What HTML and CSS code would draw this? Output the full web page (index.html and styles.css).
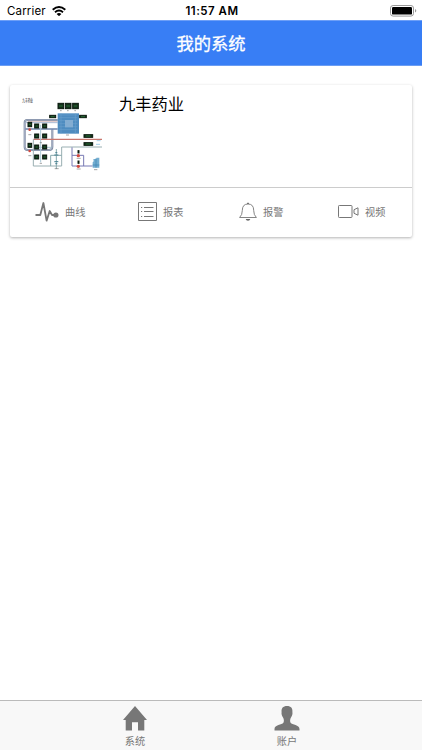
FILE: index.html
```
<!DOCTYPE html>
<html lang="zh-CN">
<head>
  <meta charset="UTF-8">
  <meta name="viewport" content="width=device-width, initial-scale=1.0">
  <title>我的系统</title>
  <link rel="stylesheet" href="styles.css">
</head>
<body>
  <div class="status-bar">
    <div class="carrier">
      <span>Carrier</span>
      <svg class="wifi" viewBox="0 0 14 10">
        <path d="M.7 3.8Q7-1.6 13.3 3.8M3 6.3Q7 2.9 11 6.3" fill="none" stroke="#000" stroke-width="1.9"/>
        <path d="M4.6 7.9Q7 6 9.4 7.9L7 10.2z"/>
      </svg>
    </div>
    <div class="time">11:57 AM</div>
    <svg class="battery" viewBox="0 0 27 12">
      <rect x=".5" y=".5" width="23" height="10.6" rx="2.6" fill="#fff" stroke="#999"/>
      <rect x="2" y="2" width="20" height="7.6" rx="1.2"/>
      <path d="M25 4v3.6q1.3-.6 1.3-1.8T25 4" fill="#999"/>
    </svg>
  </div>

  <header class="header">我的系统</header>

  <main class="content">
    <div class="card">
      <div class="card-main">
        <svg class="thumb" viewBox="0 0 300 300">
          <text x="37" y="51" textLength="32" lengthAdjust="spacingAndGlyphs" class="thumb-title">九丰药业</text>
          <!-- 管道 -->
          <g fill="none" stroke-width="3">
            <path d="M143 105H52q-8 0-8 8v73q0 9 9 9h64q10 0 10-10v-52" stroke="#75829b" stroke-width="6"/>
            <path d="M143 105H52q-8 0-8 8v73q0 9 9 9h64q10 0 10-10v-52" stroke="#c3cbdc" stroke-width="2"/>
            <path d="M46 113H143" stroke="#a9b8d2"/>
            <path d="M46 132H143" stroke="#6e83aa" stroke-width="4"/>
            <path d="M54 109H143" stroke="#c8a3a3" stroke-width="2"/>
            <path d="M70 163H276" stroke="#c9766e" stroke-width="3.5"/>
            <path d="M70 163V243H155V186H276" stroke="#9aafb2"/>
            <path d="M92 119V232M74 187H125" stroke="#aac6d4"/>
            <path d="M122 211H155M122 211V243M139 192V252" stroke="#88a9ad"/>
            <path d="M186 187V243H248M186 211H221V243" stroke="#7779b4"/>
          </g>
          <rect x="143" y="85" width="64" height="61" fill="#4e8cc0"/>
          <path d="M148 90H202M148 98H202M148 107H202M148 116H202M148 125H202M148 134H202M153 86V145M196 86V145" stroke="#689fcb" stroke-width="2"/>
          <rect x="165" y="105" width="24" height="22" fill="#83add2"/>
          <!-- 数据显示框 -->
          <g fill="#123018" stroke="#0a190e" stroke-width="3">
            <rect x="144" y="55" width="17" height="16"/><rect x="166" y="55" width="17" height="16"/><rect x="188" y="55" width="17" height="16"/>
            <rect x="119" y="91" width="18" height="7"/><rect x="209" y="91" width="20" height="7"/>
            <rect x="222" y="149" width="26" height="8"/><rect x="222" y="173" width="26" height="8"/>
            <rect x="54" y="112" width="11" height="13"/><rect x="74" y="117" width="12" height="12"/><rect x="98" y="117" width="12" height="12"/>
            <rect x="74" y="147" width="12" height="12"/><rect x="98" y="147" width="12" height="12"/>
            <rect x="54" y="175" width="11" height="12"/><rect x="74" y="180" width="12" height="12"/><rect x="98" y="180" width="12" height="12"/>
            <rect x="74" y="210" width="12" height="12"/><rect x="98" y="210" width="12" height="12"/>
            <rect x="204" y="197" width="3" height="7"/><rect x="204" y="228" width="3" height="7"/>
          </g>
          <path d="M147 63H158M169 63H180M191 63H202M122 95H134M213 95H225M227 153H242M227 177H242M56 118H63M77 123H83M101 123H107M77 153H83M101 153H107M56 181H63M77 186H83M101 186H107M77 216H83M101 216H107" stroke="#286b38" stroke-width="3"/>
          <g fill="#d24a40">
            <circle cx="59" cy="134" r="4"/><circle cx="59" cy="198" r="4"/>
            <circle cx="205" cy="212" r="5"/><circle cx="205" cy="244" r="5"/>
          </g>
          <path d="M133 210h12M133 230h12M136 203h6M136 236h6" stroke="#457f90" stroke-width="3"/>
          <path d="M250 222h9v-4h9v30h-20v-16l3-3z" fill="#73add0"/>
          <path d="M248 240h20M258 220v28" stroke="#3d84b3" stroke-width="2"/>
          <path d="M55 149h9M55 212h9M89 173h7M89 235h7M134 251h12M168 150h9M200 220h12M200 252h12M252 254h10M150 77h5M171 77h5M193 77h5" stroke="#777" stroke-width="2"/>
          <path d="M260 167h12M258 178h12" stroke="#79b9df" stroke-width="2"/>
        </svg>
        <h2 class="card-title">九丰药业</h2>
      </div>
      <div class="actions">
        <div class="action">
          <svg class="icon-curve" viewBox="0 0 24 20">
            <path d="M.5 13H5.3L8.4 1 11.6 18.7 14.7 9 17 13H20" fill="none" stroke="#777" stroke-width="1.8" stroke-linejoin="round"/>
            <circle cx="20.9" cy="13" r="2.6" fill="#777"/>
          </svg>
          <span>曲线</span>
        </div>
        <div class="action">
          <svg class="icon-list" viewBox="0 0 19 19">
            <path d="M.5.5H18.5V18.5H.5zM6 5.5H15.5M6 9.5H15.5M6 14.5H15.5M3 5.5H4.2M3 9.5H4.2M3 14.5H4.2" fill="none" stroke="#777"/>
          </svg>
          <span>报表</span>
        </div>
        <div class="action">
          <svg class="icon-bell" viewBox="0 0 18 19">
            <path d="M.6 15.5Q3.3 13 3.3 8.5 3.3 2 9 2 14.7 2 14.7 8.5 14.7 13 17.4 15.5z" fill="none" stroke="#777" stroke-width=".9"/>
            <path d="M8 2q0-1.6 1-1.6T10 2zM6.7 17H11.3Q11 18.7 9 18.7 7 18.7 6.7 17" fill="#666"/>
          </svg>
          <span>报警</span>
        </div>
        <div class="action">
          <svg class="icon-video" viewBox="0 0 21 13">
            <rect x=".5" y=".5" width="13.5" height="12" rx=".8" fill="none" stroke="#777"/>
            <path d="M16 4.7 20 2.8V10.2L16 8.3z" fill="none" stroke="#777"/>
          </svg>
          <span>视频</span>
        </div>
      </div>
    </div>
  </main>

  <nav class="tabs">
    <div class="tab">
      <svg viewBox="0 0 24 25" fill="#777">
        <path d="M12 0 24 14H21.3V24.5H15V16.3H9V24.5H2.7V14H0z"/>
      </svg>
      <span>系统</span>
    </div>
    <div class="tab">
      <svg viewBox="0 0 24 25" fill="#777">
        <path d="M12 0C8 0 6.2 2.2 6.6 6 6.2 8 7 10 8 11.6 9 13.3 9.2 15.3 8.4 16.8 7 19-.5 18.8-.5 23V24.5H24.5V23C24.5 18.8 17 19 15.6 16.8 14.8 15.3 15 13.3 16 11.6 17 10 17.8 8 17.4 6 17.8 2.2 16 0 12 0z"/>
      </svg>
      <span>账户</span>
    </div>
  </nav>
</body>
</html>
```
FILE: styles.css
```
* {
  box-sizing: border-box;
}
body {
  margin: 0;
  height: 100vh;
  display: flex;
  flex-direction: column;
  overflow: hidden;
  background: #fff;
  color: #000;
  font-family: Inter, "Noto Sans CJK SC", sans-serif;
}
svg {
  display: block;
  flex: none;
}
.status-bar {
  height: 20px;
  padding: 2px 5px 0 7px;
  display: grid;
  grid-template-columns: 1fr auto 1fr;
  align-items: center;
  font-size: 11.5px;
}
.carrier {
  display: flex;
  align-items: center;
  gap: 6px;
  letter-spacing: 0.15px;
}
.wifi {
  width: 14px;
  height: 10px;
}
.time {
  font-weight: 600;
  letter-spacing: 0.5px;
}
.battery {
  width: 27px;
  height: 12px;
  justify-self: end;
}
.header {
  height: 46px;
  border-top: 1px solid #6d9ff7;
  border-bottom: 1px solid #6b9df3;
  background: #387ef5;
  color: #fff;
  font-size: 17.3px;
  font-weight: 400;
  -webkit-text-stroke: 0.3px #fff;
  line-height: 45px;
  text-align: center;
}
.content {
  flex: 1;
  padding: 19px 10px;
}
.card {
  height: 152px;
  border-radius: 2px;
  background: #fff;
  box-shadow: 0 1px 3px rgba(0, 0, 0, 0.3);
}
.card-main {
  height: 103px;
  display: flex;
  border-bottom: 1px solid #ccc;
}
.thumb {
  width: 100px;
  height: 100px;
}
.thumb-title {
  font-size: 13px;
}
.card-title {
  margin: 7px 0 0 9px;
  font-size: 16.3px;
  font-weight: 400;
  line-height: 24px;
}
.actions {
  height: 47px;
  display: grid;
  grid-template-columns: repeat(4, 1fr);
}
.action {
  display: flex;
  align-items: center;
  justify-content: center;
  gap: 6px;
  color: #777;
  font-size: 10.2px;
}
.icon-curve {
  width: 24px;
  height: 20px;
}
.icon-list {
  width: 19px;
  height: 19px;
}
.icon-bell {
  width: 18px;
  height: 19px;
}
.icon-video {
  width: 21px;
  height: 13px;
}
.tabs {
  height: 50px;
  display: flex;
  justify-content: center;
  border-top: 1px solid #bbb;
  background: #f8f8f8;
}
.tab {
  width: 152px;
  padding-top: 5px;
  display: flex;
  flex-direction: column;
  align-items: center;
  color: #777;
  font-size: 10.2px;
  line-height: 20px;
}
.tab svg {
  width: 24px;
  height: 25px;
  overflow: visible;
}
```
